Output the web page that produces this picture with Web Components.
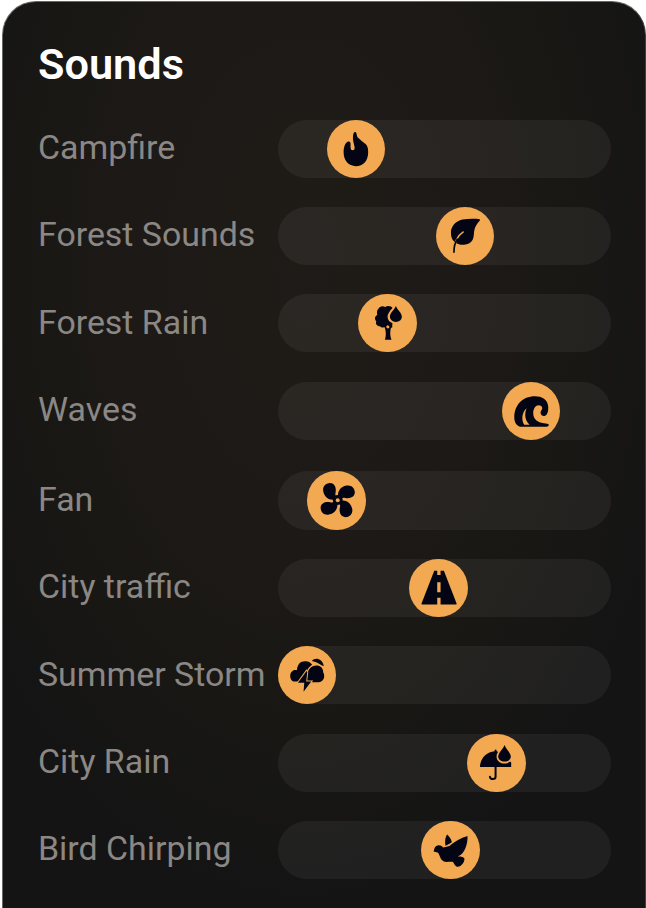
<!DOCTYPE html>
<html lang="en">
<head>
<meta charset="utf-8">
<title>Sounds</title>
<style>
html,body{margin:0;height:100%;background:#fff;overflow:hidden}
body{font-family:Roboto,sans-serif}
</style>
</head>
<body>
<sound-panel heading="Sounds">
<sound-row icon="fire" offset="48.8">Campfire</sound-row>
<sound-row icon="leaf" offset="157.8">Forest Sounds</sound-row>
<sound-row icon="tree" offset="80.3">Forest Rain</sound-row>
<sound-row icon="wave" offset="223.5">Waves</sound-row>
<sound-row icon="fan" offset="29.3" class="second">Fan</sound-row>
<sound-row icon="road" offset="131.3">City traffic</sound-row>
<sound-row icon="storm" offset="0.2">Summer Storm</sound-row>
<sound-row icon="umbrella" offset="189.4">City Rain</sound-row>
<sound-row icon="bird" offset="143.3">Bird Chirping</sound-row>
</sound-panel>
<script>
const BLADE = 'M113 104C107 98 105 93 107 86C110 72 105 58 91 57C76 57 67 69 70 82C73 100 88 110 104 107L113 109Z';
const ICONS = {
fire:'<path d="M105 57C111 57 109 64 113 73C121 81 130 88 138 94C143 99 145 108 145 118C145 144 130 160 108 160C86 160 71 143 71 119C71 101 77 87 86 86C93 85 92 94 92 102C92 108 94 112 98 112C103 112 105 108 104 102C103 94 99 86 99 75C99 65 101 57 105 57Z"/>',
leaf:'<path d="M153 58C139 56 118 56 101 59C79 64 65 81 66 99C66 110 69 119 76 125C82 130 90 137 110 134C128 130 134 120 135 103C136 84 142 74 153 62Z"/><path d="M75 158C75 131 84 108 104 95" fill="none" stroke="#f3a952" stroke-width="4.5"/><path d="M75 157C75 141 78 128 85 118" fill="none" stroke="#030514" stroke-width="5" stroke-linecap="round"/>',
tree:'<path d="M82 66C87 57 95 56 103 60C112 55 121 58 126 64L125 99L124 122C117 125 112 120 109 116C102 124 91 123 87 118C78 118 73 111 76 103C70 96 71 88 79 84C77 76 78 70 82 66Z"/><path d="M98 116C105 125 107 145 102 159H122C116 145 118 129 122 116L114 121Z"/><circle cx="111" cy="120" r="4.5" fill="#f3a952"/><path d="M134 50C129 62 110 74 110 89C110 101 119 110 134 110C149 110 157 99 157 87C157 76 141 62 134 50Z" fill="#f3a952"/><path d="M135 57C139 68 153 77 153 89C153 99 145 105 135 105C125 105 117 98 117 89C117 77 131 68 135 57Z"/>',
wave:'<path d="M160 94C158 74 142 64 120 64C82 64 58 91 58 128C58 145 67 156 81 156H155C160 156 162 153 162 150C162 146 155 146 147 145C128 143 115 133 115 115C115 100 123 90 133 91C140 92 143 97 142 102C139 107 137 109 137 114C138 120 143 124 149 123C159 121 161 106 160 94Z"/><path d="M95 100C80 113 79 136 88 150H104C96 142 91 133 91 121C91 112 93 106 95 100Z" fill="#f3a952"/>',
fan:`<path d="${BLADE}"/><path d="${BLADE}" transform="rotate(90 113.5 108.5)"/><path d="${BLADE}" transform="rotate(180 113.5 108.5)"/><path d="${BLADE}" transform="rotate(270 113.5 108.5)"/><circle cx="113.5" cy="108.5" r="15"/><circle cx="113.5" cy="109" r="6" fill="#f3a952"/>`,
road:'<path d="M97 56H126L164 154C165 157 164 158 161 158H62C59 158 58 157 59 154Z"/><path d="M106 54H116V69H106ZM106 91H116V121H106ZM106 138H116V160H106Z" fill="#f3a952"/>',
storm:'<path d="M72 128C60 127 57 117 58 108C59 98 69 91 78 94C79 77 88 67 102 67C112 66 120 71 124 78C116 84 112 91 111 101L108 128Z"/><path d="M106 130V101C111 90 123 80 136 80C149 80 157 88 157 100C165 114 157 130 143 130Z"/><path d="M109 99C112 89 119 81 131 77" fill="none" stroke="#f3a952" stroke-width="4"/><path d="M123 66C132 54 154 57 159 81C152 81 147 72 123 66Z"/><path d="M107 96L81 132H100L98 159L121 128H106L109 99Z" stroke="#f3a952" stroke-width="6" paint-order="stroke"/>',
umbrella:'<path d="M60 120C61 94 79 76 104 73V69Q107 66 110 69V73L127 79L154 107V120Z"/><path d="M107 118V150C107 159 91 159 90 150" fill="none" stroke="#030514" stroke-width="6" stroke-linecap="round"/><path d="M134 49C130 62 110 73 110 89C110 102 120 110 134 110C148 110 158 100 158 87C158 74 140 61 134 49Z" fill="#f3a952"/><path d="M134 54C138 67 153 77 153 89C153 98 145 104 134 104C123 104 115 98 115 89C115 77 130 66 134 54Z"/>',
bird:'<path d="M161 66C145 70 119 84 107 96L87 101C82 91 64 91 61 105L59 113L71 116C78 121 77 137 90 143C97 146 112 142 118 145C121 151 125 159 132 159C143 158 151 147 152 135C148 126 138 129 132 127C152 121 162 91 161 66Z"/><path d="M100 62C94 69 92 84 95 96L107 91L114 85C112 75 105 67 100 62Z"/><path d="M93 98L116 86" fill="none" stroke="#f3a952" stroke-width="2.5"/>'
};
class SoundKnob extends HTMLElement {
  connectedCallback(){
    this.attachShadow({mode:'open'}).innerHTML = `<style>
:host{display:block;width:58.3px;height:58.3px;border-radius:50%;background:#f3a952}
svg{display:block;width:100%;height:100%;fill:#030514}
</style><svg viewBox="21 21 175.5 175.5">${ICONS[this.getAttribute('icon')]}</svg>`;
  }
}
class SoundRow extends HTMLElement {
  connectedCallback(){
    this.attachShadow({mode:'open'}).innerHTML = `<style>
:host{display:grid;grid-template-columns:240px 333px;align-items:center;height:58.3px}
.label{font-size:33.9px;line-height:40px;white-space:nowrap;color:#8b8784;padding-bottom:1.4px}
.track{height:58.3px;border-radius:30px;background:rgba(255,255,255,.055);display:flex}
sound-knob{margin-left:${this.getAttribute('offset')}px}
</style><div class="label"><slot></slot></div><div class="track"><sound-knob icon="${this.getAttribute('icon')}"></sound-knob></div>`;
  }
}
class SoundPanel extends HTMLElement {
  connectedCallback(){
    this.attachShadow({mode:'open'}).innerHTML = `<style>
:host{display:block;box-sizing:border-box;margin:1px 0 0 2px;width:644px;height:940px;border:1px solid #666864;border-right-color:#40413e;border-radius:34px;padding:0 0 0 35px;
background:radial-gradient(ellipse 390px 640px at 300px 260px,#1f1b17 0%,#1d1916 45%,#181714 75%,#141414 100%)}
h1{margin:0;padding-top:38px;height:79.5px;font-size:43.3px;line-height:50px;font-weight:600;color:#fff}
.rows{display:flex;flex-direction:column;gap:29.05px}
::slotted(.second){margin-top:2.6px}
</style><h1>${this.getAttribute('heading')}</h1><div class="rows"><slot></slot></div>`;
  }
}
customElements.define('sound-knob',SoundKnob);
customElements.define('sound-row',SoundRow);
customElements.define('sound-panel',SoundPanel);
</script>
</body>
</html>
